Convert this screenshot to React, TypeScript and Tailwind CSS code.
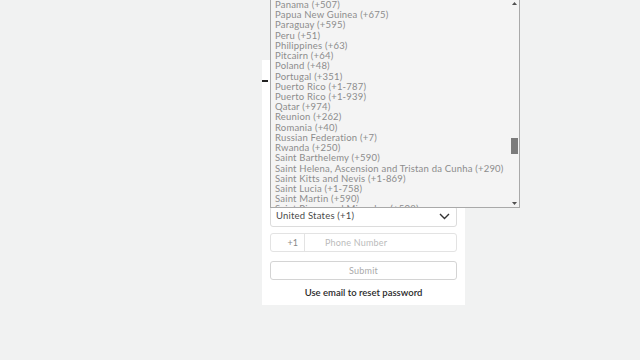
const countries = [
  'Panama (+507)',
  'Papua New Guinea (+675)',
  'Paraguay (+595)',
  'Peru (+51)',
  'Philippines (+63)',
  'Pitcairn (+64)',
  'Poland (+48)',
  'Portugal (+351)',
  'Puerto Rico (+1-787)',
  'Puerto Rico (+1-939)',
  'Qatar (+974)',
  'Reunion (+262)',
  'Romania (+40)',
  'Russian Federation (+7)',
  'Rwanda (+250)',
  'Saint Barthelemy (+590)',
  'Saint Helena, Ascension and Tristan da Cunha (+290)',
  'Saint Kitts and Nevis (+1-869)',
  'Saint Lucia (+1-758)',
  'Saint Martin (+590)',
  'Saint Pierre and Miquelon (+508)',
];

function CountryList() {
  return (
    <div className="absolute left-[270px] top-0 w-[250px] h-[208px] bg-[#f4f4f4] border border-[#a9a9a9] border-t-0 flex overflow-hidden z-10">
      {/* Options */}
      <div className="flex-1 overflow-hidden">
        <div className="mt-[0px]">
          {countries.map((c) => (
            <div
              key={c}
              className="h-[10.22px] pl-[4px] text-[9.5px] leading-[10.22px] tracking-[0.2px] text-[#8c8c8c] whitespace-nowrap"
            >
              {c}
            </div>
          ))}
        </div>
      </div>

      {/* Scrollbar */}
      <div className="w-[9px] flex flex-col items-center justify-between py-[2px] bg-[#f4f4f4]">
        <svg width="5" height="3" viewBox="0 0 5 3">
          <path d="M0 3 L2.5 0 L5 3 Z" fill="#505050" />
        </svg>
        <div className="flex-1 w-full relative">
          <div className="absolute left-[1px] right-[1px] top-[133px] h-[16px] bg-[#7b7b7b]" />
        </div>
        <svg width="5" height="3" viewBox="0 0 5 3">
          <path d="M0 0 L2.5 3 L5 0 Z" fill="#505050" />
        </svg>
      </div>
    </div>
  );
}

export default function App() {
  return (
    <div
      className="relative w-[640px] h-[360px] bg-[#f1f2f2] overflow-hidden"
      style={{ fontFamily: '"Lato", "Open Sans", sans-serif' }}
    >
      <CountryList />

      <div className="absolute left-[262px] top-[60px] w-[203px] h-[245px] bg-white flex flex-col px-[8px]">
        {/* Heading behind list */}
        <div className="mt-[20px] -ml-[8px] w-[6px] h-[2px] bg-[#222]" />

        <div className="mt-[124px] flex flex-col">
          {/* Country select */}
          <div className="h-[21px] border border-[#dcdcdc] rounded-[3px] flex items-center justify-between pl-[5px] pr-[6px]">
            <span className="text-[9.5px] tracking-[0.2px] text-[#4a4a4a]">United States (+1)</span>
            <svg width="11" height="7" viewBox="0 0 11 7">
              <path d="M1 1 L5.5 5.5 L10 1" fill="none" stroke="#333" strokeWidth="1.4" />
            </svg>
          </div>

          {/* Phone */}
          <div className="mt-[6px] h-[19px] border border-[#e3e3e3] rounded-[3px] flex items-center">
            <div className="w-[34px] h-full border-r border-[#e3e3e3] flex items-center justify-end pr-[6px] text-[9px] text-[#888]">
              +1
            </div>
            <span className="pl-[20px] text-[9px] tracking-[0.2px] text-[#bbb]">Phone Number</span>
          </div>

          {/* Submit */}
          <div className="mt-[9px] h-[19px] border border-[#d4d4d4] rounded-[3px] flex items-center justify-center text-[9px] tracking-[0.2px] text-[#aaa]">
            Submit
          </div>

          <div className="mt-[6px] text-center text-[9.5px] font-semibold text-[#2a2a2a]">
            Use email to reset password
          </div>
        </div>
      </div>
    </div>
  );
}
